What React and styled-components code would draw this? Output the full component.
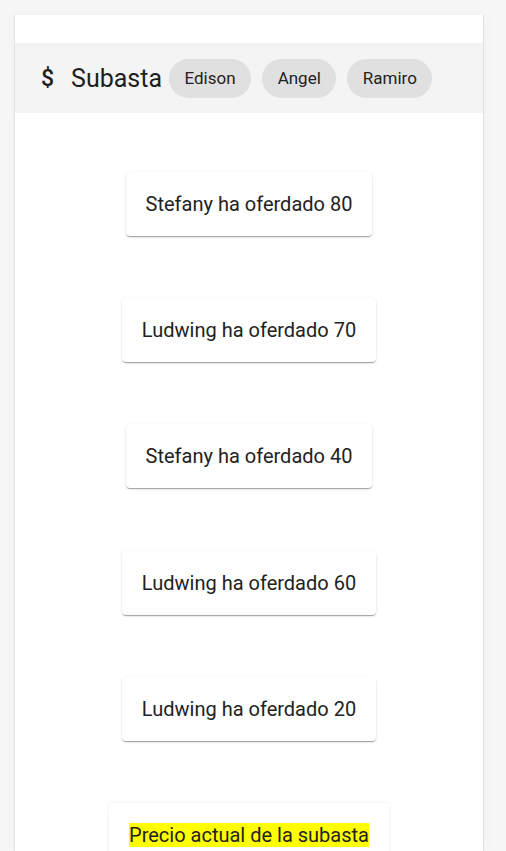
import React from 'react';
import styled, { createGlobalStyle } from 'styled-components';

const GlobalStyle = createGlobalStyle`
  body {
    margin: 0;
    background: #f7f7f7;
    font-family: Roboto, "Liberation Sans", sans-serif;
    overflow: hidden;
  }
`;

const bids = [
  { name: 'Stefany', amount: 80 },
  { name: 'Ludwing', amount: 70 },
  { name: 'Stefany', amount: 40 },
  { name: 'Ludwing', amount: 60 },
  { name: 'Ludwing', amount: 20 },
];

const users = ['Edison', 'Angel', 'Ramiro'];

const App = () => {
  return (
    <Page>
      <GlobalStyle />
      <Card>
        <Header>
          <Title>
            <Dollar>$</Dollar>
            Subasta
          </Title>
          <Chips>
            {users.map((u) => (
              <Chip key={u}>{u}</Chip>
            ))}
          </Chips>
        </Header>
        <BidList>
          {bids.map((b, i) => (
            <BidBox key={i}>
              {b.name} ha oferdado {b.amount}
            </BidBox>
          ))}
          <PriceBox>
            <Highlight>Precio actual de la subasta</Highlight>
          </PriceBox>
        </BidList>
      </Card>
    </Page>
  );
};

const Page = styled.div`
  padding: 15px 22px 0 14px;
  height: 851px;
  box-sizing: border-box;
`;

const Card = styled.div`
  background: #fff;
  height: 100%;
  padding-top: 28px;
  box-sizing: border-box;
  border-left: 1px solid #e4e4e4;
  border-right: 1px solid #e0e0e0;
  box-shadow: 0 0 12px rgba(0, 0, 0, 0.04);
`;

const Header = styled.div`
  display: flex;
  align-items: center;
  height: 70px;
  background: #f4f4f4;
  padding-left: 26px;
`;

const Title = styled.div`
  display: flex;
  align-items: center;
  font-size: 25px;
  color: #1e1e1e;
`;

const Dollar = styled.span`
  font-size: 23px;
  font-weight: 500;
  margin-right: 17px;
`;

const Chips = styled.div`
  display: flex;
  gap: 11px;
  margin-left: 7px;
`;

const Chip = styled.div`
  height: 39px;
  padding: 0 15.5px;
  display: flex;
  align-items: center;
  border-radius: 20px;
  background: #e0e0e0;
  font-size: 17px;
  color: #222;
`;

const BidList = styled.div`
  display: flex;
  flex-direction: column;
  align-items: center;
  gap: 62.2px;
  padding-top: 59px;
`;

const BidBox = styled.div`
  height: 64px;
  padding: 0 20px;
  display: flex;
  align-items: center;
  border-radius: 4px;
  background: #fff;
  font-size: 20px;
  color: #222;
  box-shadow: 0 2px 1px -1px rgba(0, 0, 0, 0.2), 0 1px 1px 0 rgba(0, 0, 0, 0.14),
    0 1px 3px 0 rgba(0, 0, 0, 0.12);
`;

const PriceBox = styled.div`
  padding: 20px 20px;
  border-radius: 4px;
  background: #fff;
  font-size: 20px;
  color: #222;
  box-shadow: 0 0 4px rgba(0, 0, 0, 0.08);
`;

const Highlight = styled.span`
  background: #ffff00;
`;

export default App;
